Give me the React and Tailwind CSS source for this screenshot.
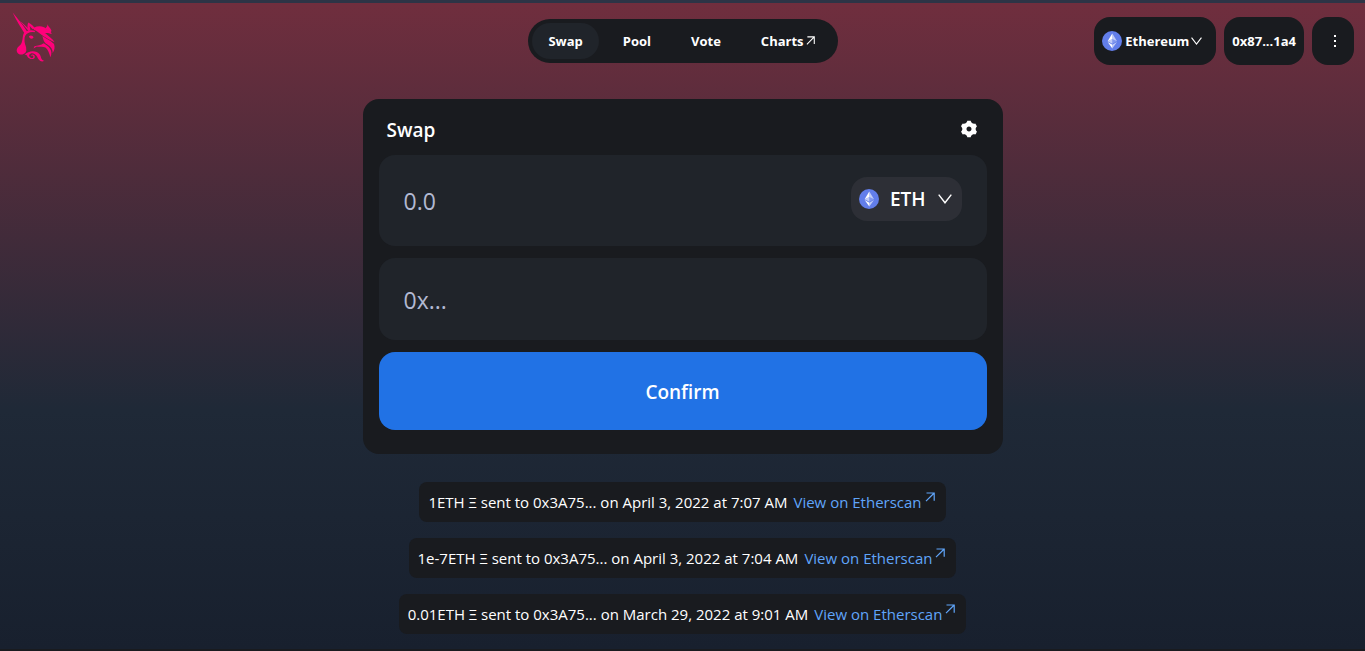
import { RiSettings3Fill } from "react-icons/ri";

const transfers = [
  { id: 1, amount: "1", date: "April 3, 2022 at 7:07 AM" },
  { id: 2, amount: "1e-7", date: "April 3, 2022 at 7:04 AM" },
  { id: 3, amount: "0.01", date: "March 29, 2022 at 9:01 AM" },
];

function UnicornLogo() {
  return (
    <svg viewBox="38 34 136 156" className="h-[52px] w-[45px]" fill="#ff007a" aria-hidden="true">
      <path d="M40 38 C54 56 68 72 80 90 L85 98 L77 103 C64 82 50 60 40 38Z" />
      <path d="M62 64 L88 94 L91 92 C82 80 72 72 62 64Z" />
      <path d="M87 68 C96 72 104 79 108 87 L100 88 C96 84 93 80 91 77 L94 93 L87 92 C84 84 84 76 87 68Z" />
      <path d="M76 98 C84 92 98 90 108 94 L106 98 C95 95 84 99 78 108 C75 114 76 120 76 126 C77 136 82 140 81 150 C83 158 74 166 65 165 C56 164 50 156 53 148 C55 140 64 138 67 130 C72 118 69 106 76 98Z" />
      <path d="M89 110 C94 105 102 108 103 114 C98 119 91 118 89 110Z" />
      <path d="M104 84 C118 77 134 79 142 88 C150 94 158 98 158 103 C150 101 146 99 138 100 C146 108 160 116 167 128 C154 122 140 114 128 106 C118 98 112 92 104 90Z" />
      <path d="M146 72 C145 80 154 84 157 92 C157 98 152 98 148 94 C144 92 142 88 138 86 C142 84 145 80 146 72Z" />
      <path d="M130 109 C142 118 154 122 165 133 C168 142 167 152 161 160 C161 146 151 138 140 132 C134 126 132 118 130 109Z" />
      <path d="M134 131 C148 140 164 152 154 173 C150 160 147 150 139 144 C130 139 122 143 113 141 L103 147 L106 140 C115 137 126 138 134 131Z" />
      <path d="M76 166 C88 152 112 151 122 165 C127 172 124 182 136 184 C124 190 117 180 114 172 C108 160 95 158 90 166 C88 174 98 179 102 174 C104 169 99 166 97 169 L95 167 C99 162 108 165 107 173 C103 183 88 179 84 170 C82 166 80 166 76 166Z" />
    </svg>
  );
}

function EthMark() {
  return (
    <svg viewBox="0 0 32 32" className="h-5 w-5 shrink-0" aria-hidden="true">
      <circle cx="16" cy="16" r="16" fill="#627eea" />
      <g fill="#fff">
        <path fillOpacity=".602" d="M16.5 4v8.87l7.5 3.35z" />
        <path d="M16.5 4 9 16.22l7.5-3.35z" />
        <path fillOpacity=".602" d="M16.5 21.97V28L24 17.62z" />
        <path d="M16.5 28v-6.03L9 17.62z" />
        <path fillOpacity=".2" d="m16.5 20.57 7.5-4.35-7.5-3.35z" />
        <path fillOpacity=".602" d="m9 16.22 7.5 4.35v-7.7z" />
      </g>
    </svg>
  );
}

function Chevron({ className }) {
  return (
    <svg viewBox="0 0 14 10" className={className} fill="none" stroke="currentColor" strokeWidth="1.4" aria-hidden="true">
      <path d="M.7.6 7 8.8 13.3.6" />
    </svg>
  );
}

function ExternalArrow({ className }) {
  return (
    <svg viewBox="0 0 10 10" className={className} fill="none" stroke="currentColor" strokeWidth="1.2" aria-hidden="true">
      <path d="M1.5 1H9.2V8.8M9.2 1 1 9.2" />
    </svg>
  );
}

export default function App() {
  return (
    <div className="min-h-screen border-t-[3px] border-b-2 border-t-[#2d3446] border-b-[#191b1f] bg-[linear-gradient(to_bottom,#702e3e_0%,#1f2937_63%,#18202e_100%)] pb-[14px] font-['Open_Sans',sans-serif] text-white">
      <header className="grid h-[68px] grid-cols-[1fr_auto_1fr] items-center pt-2 pr-[11px] pl-3">
        <a href="#home" aria-label="Home" className="self-start justify-self-start">
          <UnicornLogo />
        </a>
        <nav className="flex h-11 items-center gap-2 rounded-full bg-[#191b1f] p-1 pr-[7px] text-[13px] font-bold">
          <a href="#swap" className="flex h-9 items-center rounded-full bg-[#20242a] px-4 pt-[2px]">Swap</a>
          <a href="#pool" className="flex h-9 items-center rounded-full px-4 pt-[2px]">Pool</a>
          <a href="#vote" className="flex h-9 items-center rounded-full px-4 pt-[2px]">Vote</a>
          <a href="#charts" className="flex h-9 items-center gap-[2px] rounded-full px-4 pt-[2px]">
            Charts
            <ExternalArrow className="mb-1 h-[9px] w-[9px]" />
          </a>
        </nav>
        <div className="flex gap-2 justify-self-end text-[13px] font-bold">
          <button type="button" className="flex h-12 items-center rounded-2xl bg-[#191b1f] pr-[14px] pl-2">
            <EthMark />
            <span className="mr-[2px] ml-[3px] pt-[2px]">Ethereum</span>
            <Chevron className="h-2 w-[11px]" />
          </button>
          <button type="button" className="h-12 rounded-2xl bg-[#191b1f] px-2 pt-[2px]">0x87...1a4</button>
          <button type="button" aria-label="More" className="flex h-12 w-[42px] items-center justify-center rounded-2xl bg-[#191b1f] pl-1">
            <svg viewBox="0 0 4 12" className="h-3 w-1" fill="currentColor" aria-hidden="true">
              <path d="M1 0h2v2H1zM1 5h2v2H1zM1 10h2v2H1z" />
            </svg>
          </button>
        </div>
      </header>

      <main className="flex flex-col items-center px-4 pt-7">
        <form className="w-full max-w-[640px] rounded-2xl bg-[#191b1f] px-4 pb-6">
          <div className="flex h-14 items-center justify-between px-2 pt-1">
            <h1 className="pt-[2px] text-[19px] font-semibold">Swap</h1>
            <button type="button" aria-label="Settings">
              <RiSettings3Fill className="h-5 w-5" />
            </button>
          </div>
          <div className="flex h-[91px] items-center rounded-2xl bg-[#20242a] px-[25px]">
            <input type="text" aria-label="Amount" placeholder="0.0" className="min-w-0 flex-1 bg-transparent pt-[2px] text-[23px] outline-none placeholder:text-[#b2b9d2]" />
            <button type="button" className="mb-1 flex h-11 items-center rounded-2xl bg-[#2d2f36] pr-[10px] pl-2">
              <EthMark />
              <span className="mr-3 ml-[11px] pt-[2px] text-[19px] font-semibold">ETH</span>
              <Chevron className="h-[10px] w-[14px]" />
            </button>
          </div>
          <div className="mt-3 flex h-[82px] items-center rounded-2xl bg-[#20242a] px-[25px]">
            <input type="text" aria-label="Recipient address" placeholder="0x..." className="min-w-0 flex-1 bg-transparent pt-[2px] text-[23px] outline-none placeholder:text-[#b2b9d2]" />
          </div>
          <button type="button" className="mt-3 h-[78px] w-full rounded-2xl bg-[#2172e5] pt-[2px] text-[19px] font-semibold">Confirm</button>
        </form>

        <ul className="mt-7 flex flex-col items-center gap-4 text-[15px]">
          {transfers.map(({ id, amount, date }) => (
            <li key={id} className="flex min-h-10 items-center gap-[6px] rounded-lg bg-[#191b1f] pr-[11px] pl-[9px]">
              <span>{amount}ETH Ξ sent to 0x3A75... on {date}</span>
              <a href="#etherscan" className="flex items-center gap-[3px] text-[#60a5fa]">
                View on Etherscan
                <ExternalArrow className="mb-[10px] h-[10px] w-[10px]" />
              </a>
            </li>
          ))}
        </ul>
      </main>
    </div>
  );
}
